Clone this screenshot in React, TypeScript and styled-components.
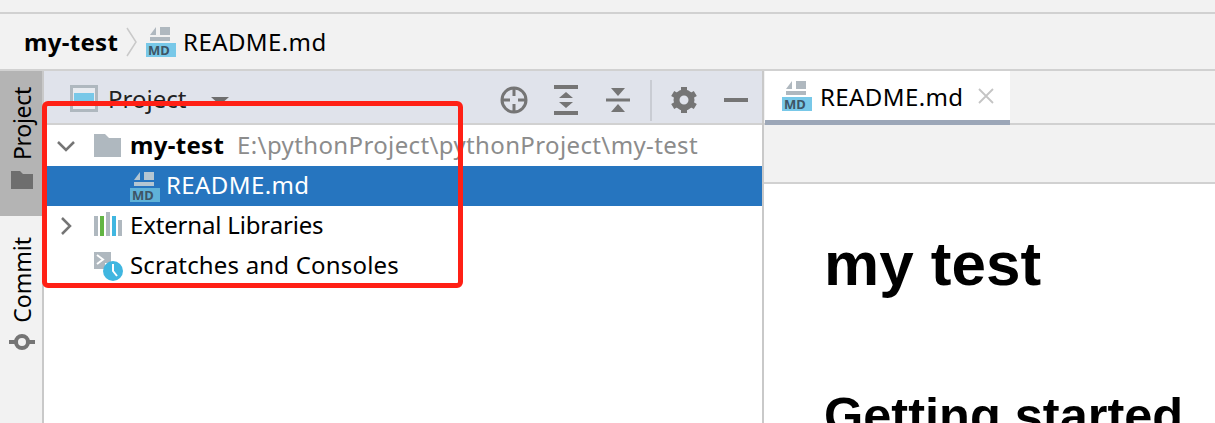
import React from "react";
import styled, { createGlobalStyle } from "styled-components";

const uiFont = `"Noto Sans", "Open Sans", sans-serif`;

const GlobalStyle = createGlobalStyle`
  html, body { margin: 0; padding: 0; background: #fff; overflow: hidden; }
  #root { width: 1215px; height: 423px; }
`;

const Page = styled.div`
  position: relative;
  width: 1215px;
  height: 423px;
  overflow: hidden;
  display: flex;
  flex-direction: column;
  background: #f2f2f2;
  font-family: ${uiFont};
  color: #000;
`;

const TopStrip = styled.div`
  height: 12px;
  flex: none;
  border-bottom: 2px solid #d1d1d1;
`;

const Breadcrumbs = styled.div`
  height: 57px;
  flex: none;
  box-sizing: border-box;
  border-bottom: 2px solid #d1d1d1;
  display: flex;
  align-items: center;
  padding-left: 24px;
  font-size: 24px;
`;

// $lift moves the text up from the row's centre, Noto sits lower than the original UI font
const Label = styled.span<{ $spacing?: number; $lift?: number }>`
  letter-spacing: ${(p) => p.$spacing ?? 0}px;
  margin-bottom: ${(p) => (p.$lift ?? 0) * 2}px;
  white-space: nowrap;
`;

const CrumbRoot = styled(Label)`
  font-weight: 700;
`;

const CrumbSep = styled.svg`
  width: 14px;
  height: 32px;
  margin: 0 7px 0 7px;
`;

const CrumbFile = styled(Label)`
  margin-left: 7px;
`;

const Body = styled.div`
  flex: 1;
  display: flex;
  min-height: 0;
`;

const Rail = styled.div`
  width: 42px;
  flex: none;
  border-right: 2px solid #c9c9c9;
  display: flex;
  flex-direction: column;
`;

const RailTab = styled.div<{ $active?: boolean; $height: number; $top: number }>`
  height: ${(p) => p.$height}px;
  flex: none;
  background: ${(p) => (p.$active ? "#b4b4b4" : "transparent")};
  display: flex;
  flex-direction: column;
  align-items: center;
  gap: 11px;
  padding: ${(p) => p.$top}px 0 0 2px;
  box-sizing: border-box;
`;

const RailLabel = styled.span<{ $spacing?: number }>`
  writing-mode: vertical-rl;
  transform: rotate(180deg);
  font-size: 23px;
  line-height: 28px;
  letter-spacing: ${(p) => p.$spacing ?? 0}px;
`;

const RailIcon = styled.svg`
  flex: none;
  display: block;
`;

const ProjectPane = styled.div`
  width: 718px;
  flex: none;
  display: flex;
  flex-direction: column;
  border-right: 2px solid #c9c9c9;
  background: #fff;
`;

const PaneHeader = styled.div`
  height: 54px;
  flex: none;
  box-sizing: border-box;
  background: #e0e3eb;
  border-bottom: 2px solid #d1d1d1;
  display: flex;
  align-items: center;
  padding: 2px 0 0 26px;
`;

const PaneTitle = styled.span`
  font-size: 24px;
  margin-left: 10px;
  color: #222;
`;

const Caret = styled.span`
  width: 0;
  height: 0;
  margin: 6px 0 0 25px;
  border-left: 9px solid transparent;
  border-right: 9px solid transparent;
  border-top: 8px solid #6e6e6e;
`;

const PaneTools = styled.div`
  margin-left: auto;
  display: flex;
  align-items: center;
  margin-right: 11px;
  padding-top: 4px;
`;

const ToolIcon = styled.svg`
  width: 30px;
  height: 30px;
  display: block;
  margin-left: 22px;
`;

const ToolDivider = styled.div`
  width: 2px;
  height: 41px;
  margin-left: 17px;
  margin-right: -5px;
  background: #c9ccd3;
`;

const Tree = styled.div`
  display: flex;
  flex-direction: column;
`;

const TreeRow = styled.div<{ $selected?: boolean; $indent: number; $height?: number }>`
  height: ${(p) => p.$height ?? 40}px;
  flex: none;
  box-sizing: border-box;
  display: flex;
  align-items: center;
  padding-left: ${(p) => p.$indent}px;
  font-size: 24px;
  background: ${(p) => (p.$selected ? "#2675bf" : "transparent")};
  color: ${(p) => (p.$selected ? "#fff" : "#000")};
  white-space: nowrap;
`;

const Chevron = styled.svg`
  width: 20px;
  height: 20px;
  flex: none;
  margin-right: 17px;
`;

const NoChevron = styled.span`
  width: 20px;
  margin-right: 17px;
  flex: none;
`;

const RowIcon = styled.svg`
  width: 30px;
  height: 30px;
  flex: none;
  margin-right: 7px;
`;

const RowBold = styled(Label)`
  font-weight: 700;
`;

const RowPath = styled(Label)`
  color: #8c8c8c;
  margin-left: 13px;
`;

const RowFile = styled(Label)`
  margin-left: 6px;
`;

const Editor = styled.div`
  flex: 1;
  min-width: 0;
  display: flex;
  flex-direction: column;
`;

const TabBar = styled.div`
  height: 54px;
  flex: none;
  box-sizing: border-box;
  background: #f2f2f2;
  border-bottom: 2px solid #d1d1d1;
  display: flex;
  padding-left: 1px;
`;

const Tab = styled.div`
  width: 245px;
  height: 54px;
  box-sizing: border-box;
  background: #fff;
  border-bottom: 5px solid #9ca7b8;
  display: flex;
  align-items: center;
  padding-left: 17px;
  font-size: 24px;
`;

const TabName = styled(Label)`
  margin-left: 8px;
`;

const TabClose = styled.svg`
  width: 16px;
  height: 16px;
  margin-left: 15px;
`;

const EditorToolbar = styled.div`
  height: 57px;
  flex: none;
  background: #f2f2f2;
  border-bottom: 2px solid #d1d1d1;
`;

const Preview = styled.div`
  flex: 1;
  min-height: 0;
  background: #fff;
  padding: 45px 0 0 60px;
  font-family: "Liberation Sans", Arial, sans-serif;
  overflow: hidden;
`;

const H1 = styled.h1`
  margin: 0;
  font-size: 62px;
  line-height: 70px;
  font-weight: 700;
`;

const H2 = styled.h2`
  margin: 88px 0 0;
  font-size: 50.500px;
  line-height: 58px;
  font-weight: 700;
  white-space: nowrap;
`;

const Annotation = styled.div`
  position: absolute;
  left: 42px;
  top: 101px;
  width: 421px;
  height: 187px;
  box-sizing: border-box;
  border: 5px solid #ff2015;
  border-radius: 6px;
  pointer-events: none;
`;

const MdWrap = styled.span<{ $shift?: number }>`
  width: 30px;
  height: 30px;
  flex: none;
  display: flex;
  flex-direction: column;
  justify-content: space-between;
  margin-top: ${(p) => p.$shift ?? 0}px;
`;

const MdSheet = styled.svg`
  width: 30px;
  height: 15px;
  display: block;
`;

const MdBadge = styled.span<{ $dim?: boolean }>`
  height: 14px;
  background: ${(p) => (p.$dim ? "#5fb2d8" : "#78c8e8")};
  color: #3d5566;
  font-size: 13px;
  line-height: 14px;
  font-weight: 700;
  padding-left: 2px;
`;

const MdIcon = ({ dim, shift }: { dim?: boolean; shift?: number }) => (
  <MdWrap $shift={shift}>
    <MdSheet viewBox="0 0 30 15">
      <path d="M10 0 V8 H4 Z M14 0 H24 V8 H14 Z M4 10 H24 V14 H4 Z" fill={dim ? "#b4c6d2" : "#afb8bf"} />
    </MdSheet>
    <MdBadge $dim={dim}>MD</MdBadge>
  </MdWrap>
);

export default function App() {
  return (
    <Page>
      <GlobalStyle />
      <TopStrip />
      <Breadcrumbs>
        <CrumbRoot $spacing={0.3} $lift={0.5}>my-test</CrumbRoot>
        <CrumbSep viewBox="0 0 14 32">
          <path d="M2 2 L11 16 L2 30" fill="none" stroke="#c9c9c9" strokeWidth="1.5" />
        </CrumbSep>
        <MdIcon />
        <CrumbFile $spacing={0.4} $lift={0.5}>README.md</CrumbFile>
      </Breadcrumbs>
      <Body>
        <Rail>
          <RailTab $active $height={145} $top={16}>
            <RailLabel $spacing={-0.3}>Project</RailLabel>
            <RailIcon width="22" height="18" viewBox="0 0 22 18">
              <path d="M0 0 H9 L12 3 H22 V18 H0 Z" fill="#6e6e6e" />
            </RailIcon>
          </RailTab>
          <RailTab $height={130} $top={21}>
            <RailLabel>Commit</RailLabel>
            <RailIcon width="26" height="16" viewBox="0 0 26 16">
              <circle cx="13" cy="8" r="6" fill="none" stroke="#757575" strokeWidth="4" />
              <path d="M0 8 H7 M19 8 H26" stroke="#757575" strokeWidth="4" />
            </RailIcon>
          </RailTab>
        </Rail>
        <ProjectPane>
          <PaneHeader>
            <svg width="28" height="27" viewBox="0 0 28 27">
              <rect x="0" y="0" width="28" height="27" fill="#afb8bf" />
              <rect x="3" y="3" width="22" height="21" fill="#e8ebf0" />
              <rect x="4" y="8" width="20" height="11" fill="#78c8e8" />
            </svg>
            <PaneTitle>Project</PaneTitle>
            <Caret />
            <PaneTools>
              <ToolIcon viewBox="0 0 30 30">
                <circle cx="15" cy="15" r="12" fill="none" stroke="#757575" strokeWidth="3" />
                <path d="M15 3 V11 M15 19 V27 M3 15 H11 M19 15 H27" stroke="#757575" strokeWidth="3" />
              </ToolIcon>
              <ToolIcon viewBox="0 0 30 30">
                <path d="M3 2 H27 M3 28 H27" stroke="#757575" strokeWidth="4" />
                <path d="M15 7 L22 13 H8 Z M15 23 L22 17 H8 Z" fill="#757575" />
              </ToolIcon>
              <ToolIcon viewBox="0 0 30 30">
                <path d="M3 15 H27" stroke="#757575" strokeWidth="3" />
                <path d="M8 3 H22 L15 11 Z M8 27 H22 L15 19 Z" fill="#757575" />
              </ToolIcon>
              <ToolDivider />
              <ToolIcon viewBox="0 0 30 30">
                <circle cx="15" cy="15" r="7.500" fill="none" stroke="#757575" strokeWidth="6" />
                <path
                  d="M15 2 V7 M15 23 V28 M3.700 8.500 L8 11 M22 19 L26.300 21.500 M3.700 21.500 L8 19 M22 11 L26.300 8.500"
                  stroke="#757575"
                  strokeWidth="6"
                />
              </ToolIcon>
              <ToolIcon viewBox="0 0 30 30">
                <path d="M3 15 H27" stroke="#757575" strokeWidth="4" />
              </ToolIcon>
            </PaneTools>
          </PaneHeader>
          <Tree>
            <TreeRow $indent={12} $height={41}>
              <Chevron viewBox="0 0 20 20">
                <path d="M2 6 L10 14 L18 6" fill="none" stroke="#757575" strokeWidth="2.500" />
              </Chevron>
              <RowIcon viewBox="0 0 30 30">
                <path d="M1 3 H12 L16 7 H28 V26 H1 Z" fill="#afb8bf" />
              </RowIcon>
              <RowBold $spacing={0.3} $lift={1.5}>my-test</RowBold>
              <RowPath $spacing={0.37} $lift={1.5}>E:\pythonProject\pythonProject\my-test</RowPath>
            </TreeRow>
            <TreeRow $selected $indent={86}>
              <MdIcon dim shift={2} />
              <RowFile $spacing={0.4} $lift={1.5}>README.md</RowFile>
            </TreeRow>
            <TreeRow $indent={12}>
              <Chevron viewBox="0 0 20 20">
                <path d="M6 2 L14 10 L6 18" fill="none" stroke="#757575" strokeWidth="2.500" />
              </Chevron>
              <RowIcon viewBox="0 0 30 30">
                <rect x="1" y="5" width="4" height="20" fill="#afb8bf" />
                <rect x="7" y="5" width="4" height="20" fill="#62b543" />
                <rect x="13" y="1" width="4" height="24" fill="#afb8bf" />
                <rect x="19" y="5" width="4" height="20" fill="#40b6e0" />
                <rect x="25" y="9" width="4" height="16" fill="#afb8bf" />
              </RowIcon>
              <Label $spacing={-0.17} $lift={1.5}>External Libraries</Label>
            </TreeRow>
            <TreeRow $indent={12}>
              <NoChevron />
              <RowIcon viewBox="0 0 30 30">
                <path d="M1 1 H18 V12 H12 V18 H1 Z" fill="#afb8bf" />
                <path d="M4 4 L10 8.500 L4 13" fill="none" stroke="#fff" strokeWidth="2" />
                <circle cx="20" cy="20" r="10" fill="#40b6e0" />
                <path d="M20 13 V20 L24 25" fill="none" stroke="#fff" strokeWidth="2" />
              </RowIcon>
              <Label $spacing={0.18} $lift={1.5}>Scratches and Consoles</Label>
            </TreeRow>
          </Tree>
        </ProjectPane>
        <Editor>
          <TabBar>
            <Tab>
              <MdIcon />
              <TabName $spacing={0.4} $lift={-0.5}>README.md</TabName>
              <TabClose viewBox="0 0 16 16">
                <path d="M1 1 L15 15 M15 1 L1 15" stroke="#c4c4c4" strokeWidth="1.800" />
              </TabClose>
            </Tab>
          </TabBar>
          <EditorToolbar />
          <Preview>
            <H1>my test</H1>
            <H2>Getting started</H2>
          </Preview>
        </Editor>
      </Body>
      <Annotation />
    </Page>
  );
}
